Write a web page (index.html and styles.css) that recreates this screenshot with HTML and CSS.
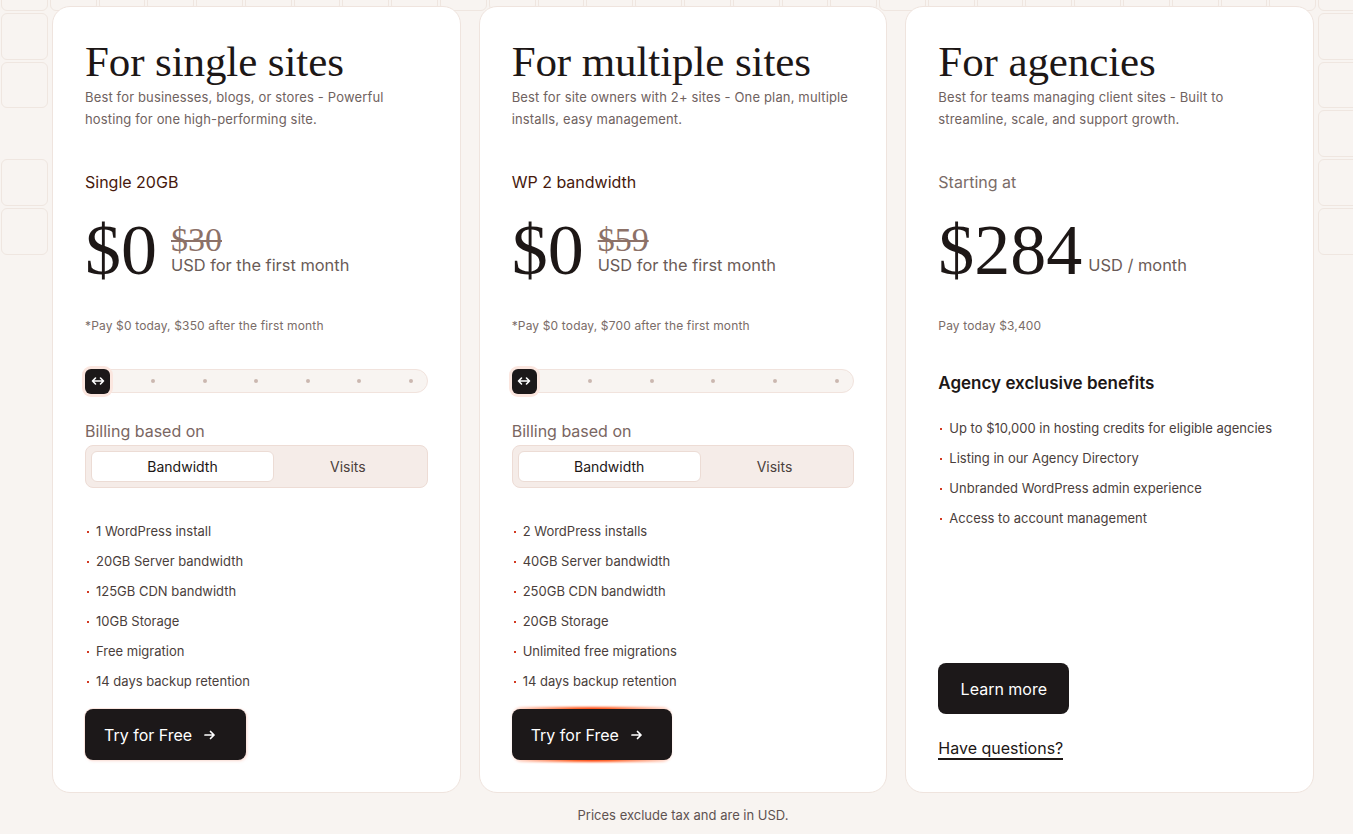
FILE: index.html
```html
<!DOCTYPE html>
<html lang="en">
<head>
<meta charset="utf-8">
<title>Pricing</title>
<link rel="stylesheet" href="styles.css">
</head>
<body>
<div class="bg-grid" aria-hidden="true">
  <i></i><i></i><i></i><i></i><i></i><i></i><i></i><i></i><i></i><i></i><i></i><i></i><i></i><i></i><i></i><i></i><i></i><i></i><i></i><i></i><i></i><i></i><i></i><i></i><i></i><i></i><i></i><i></i>
  <i class="l"></i><i class="r"></i>
  <i class="l"></i><i class="r"></i>
  <i class="l hide"></i><i class="r"></i>
  <i class="l"></i><i class="r"></i>
  <i class="l"></i><i class="r"></i>
</div>

<main class="page">
  <section class="cards">
    <article class="card">
      <h2 class="title">For single sites</h2>
      <p class="desc">Best for businesses, blogs, or stores - Powerful hosting for one high-performing site.</p>
      <div class="plan">Single 20GB</div>
      <div class="price-row">
        <div class="price">$0</div>
        <div class="price-side">
          <div class="old">$30</div>
          <div class="unit">USD for the first month</div>
        </div>
      </div>
      <p class="paynote">*Pay $0 today, $350 after the first month</p>
      <div class="slider">
        <span class="handle"><svg width="14" height="10" viewBox="0 0 14 10"><path d="M1.5 5h11M4.5 2 1.5 5l3 3M9.5 2l3 3-3 3" fill="none" stroke="#fff" stroke-width="1.6" stroke-linecap="round" stroke-linejoin="round"/></svg></span>
        <span class="dots dots-6"><i></i><i></i><i></i><i></i><i></i><i></i></span>
      </div>
      <div class="billing-label">Billing based on</div>
      <div class="toggle">
        <span class="opt active">Bandwidth</span>
        <span class="opt">Visits</span>
      </div>
      <ul class="features">
        <li>1 WordPress install</li>
        <li>20GB Server bandwidth</li>
        <li>125GB CDN bandwidth</li>
        <li>10GB Storage</li>
        <li>Free migration</li>
        <li>14 days backup retention</li>
      </ul>
      <a class="btn btn-soft">Try for Free <svg width="12" height="10" viewBox="0 0 12 10"><path d="M1 5h9M6.5 1.5 10 5l-3.5 3.5" fill="none" stroke="#fff" stroke-width="1.7" stroke-linecap="round" stroke-linejoin="round"/></svg></a>
    </article>

    <article class="card">
      <h2 class="title">For multiple sites</h2>
      <p class="desc">Best for site owners with 2+ sites - One plan, multiple installs, easy management.</p>
      <div class="plan">WP 2 bandwidth</div>
      <div class="price-row">
        <div class="price">$0</div>
        <div class="price-side">
          <div class="old">$59</div>
          <div class="unit">USD for the first month</div>
        </div>
      </div>
      <p class="paynote">*Pay $0 today, $700 after the first month</p>
      <div class="slider">
        <span class="handle"><svg width="14" height="10" viewBox="0 0 14 10"><path d="M1.5 5h11M4.5 2 1.5 5l3 3M9.5 2l3 3-3 3" fill="none" stroke="#fff" stroke-width="1.6" stroke-linecap="round" stroke-linejoin="round"/></svg></span>
        <span class="dots dots-5"><i></i><i></i><i></i><i></i><i></i></span>
      </div>
      <div class="billing-label">Billing based on</div>
      <div class="toggle">
        <span class="opt active">Bandwidth</span>
        <span class="opt">Visits</span>
      </div>
      <ul class="features">
        <li>2 WordPress installs</li>
        <li>40GB Server bandwidth</li>
        <li>250GB CDN bandwidth</li>
        <li>20GB Storage</li>
        <li>Unlimited free migrations</li>
        <li>14 days backup retention</li>
      </ul>
      <a class="btn btn-glow">Try for Free <svg width="12" height="10" viewBox="0 0 12 10"><path d="M1 5h9M6.5 1.5 10 5l-3.5 3.5" fill="none" stroke="#fff" stroke-width="1.7" stroke-linecap="round" stroke-linejoin="round"/></svg></a>
    </article>

    <article class="card">
      <h2 class="title">For agencies</h2>
      <p class="desc">Best for teams managing client sites - Built to streamline, scale, and support growth.</p>
      <div class="plan plan-muted">Starting at</div>
      <div class="price-row price-row-tight">
        <div class="price">$284</div>
        <div class="price-side">
          <div class="unit">USD / month</div>
        </div>
      </div>
      <p class="paynote">Pay today $3,400</p>
      <h3 class="benefits-title">Agency exclusive benefits</h3>
      <ul class="features features-agency">
        <li>Up to $10,000 in hosting credits for eligible agencies</li>
        <li>Listing in our Agency Directory</li>
        <li>Unbranded WordPress admin experience</li>
        <li>Access to account management</li>
      </ul>
      <div class="agency-actions">
        <a class="btn btn-center">Learn more</a>
        <a class="questions">Have questions?</a>
      </div>
    </article>
  </section>
  <p class="footnote">Prices exclude tax and are in USD.</p>
</main>
</body>
</html>
```

FILE: styles.css
```css
* { box-sizing: border-box; }

html, body {
  margin: 0;
  padding: 0;
}

body {
  width: 1353px;
  height: 834px;
  overflow: hidden;
  position: relative;
  background: #f8f4f1;
  font-family: Inter, "Noto Sans", "Liberation Sans", sans-serif;
  color: #1d1716;
}

/* decorative tile grid behind the cards */
.bg-grid {
  position: absolute;
  top: -37px;
  left: 0;
  width: 1366px;
  display: grid;
  grid-template-columns: repeat(28, 1fr);
  grid-auto-rows: 48.8px;
  z-index: 0;
}
.bg-grid i {
  display: block;
  margin: 1px;
  border: 1px solid #efe6e0;
  border-radius: 6px;
}
.bg-grid i.l { grid-column: 1; }
.bg-grid i.r { grid-column: 28; }
.bg-grid i.hide { border-color: transparent; }

.page {
  position: relative;
  z-index: 1;
  padding: 6px 0 0 52px;
}

.cards {
  width: 1262px;
  display: grid;
  grid-template-columns: repeat(3, 1fr);
  gap: 18px;
}

.card {
  position: relative;
  z-index: 0;
  height: 787px;
  background: #fff;
  border: 1px solid #efe4de;
  border-radius: 18px;
  padding: 32px;
  display: flex;
  flex-direction: column;
}

.title {
  margin: 0;
  font-family: "Liberation Serif", "Times New Roman", serif;
  font-weight: 400;
  font-size: 43px;
  line-height: 44px;
  padding-top: 1px;
  height: 44px;
  color: #1d1716;
  letter-spacing: -0.1px;
}

.desc {
  margin: 3px 0 0;
  font-size: 13px;
  line-height: 22px;
  letter-spacing: 0.15px;
  color: #6f6260;
}

.plan {
  margin-top: 40px;
  font-size: 16px;
  line-height: 24px;
  color: #47190d;
}
.plan-muted { color: #7a6c68; }

.price-row {
  margin-top: 20px;
  display: flex;
  align-items: flex-end;
  gap: 14px;
}
.price-row-tight { gap: 6px; }
.price {
  font-family: "Liberation Serif", "Times New Roman", serif;
  font-size: 72px;
  line-height: 72px;
  color: #1d1716;
}
.price-side {
  padding-bottom: 10px;
  display: flex;
  flex-direction: column;
}
.old {
  font-family: "Liberation Serif", "Times New Roman", serif;
  font-size: 34px;
  line-height: 28px;
  color: #8c7168;
  text-decoration: line-through;
  text-decoration-thickness: 1.5px;
}
.unit {
  font-size: 16.4px;
  line-height: 22px;
  color: #6a5b57;
}

.paynote {
  margin: 31px 0 0;
  font-size: 12px;
  line-height: 18px;
  letter-spacing: 0.15px;
  color: #7a6c68;
}

.slider {
  margin-top: 34px;
  height: 24px;
  border: 1px solid #f1e3dd;
  border-radius: 12px;
  background: #f8f4f1;
  display: flex;
  align-items: center;
}
.handle {
  width: 25px;
  height: 25px;
  margin-left: -1px;
  border-radius: 6px;
  background: #1c1819;
  box-shadow: 0 0 0 3px #fbe6df;
  display: flex;
  align-items: center;
  justify-content: center;
}
.dots {
  flex: 1;
  display: flex;
  justify-content: space-between;
  padding-right: 14px;
}
.dots-6 { padding-left: 41px; }
.dots-5 { padding-left: 51px; }
.dots i {
  width: 4px;
  height: 4px;
  border-radius: 50%;
  background: #cbb7b0;
}

.billing-label {
  margin-top: 26px;
  font-size: 16px;
  line-height: 24px;
  color: #7a6662;
}

.toggle {
  margin-top: 2px;
  height: 43px;
  padding: 5px;
  border: 1px solid #eddcd5;
  border-radius: 8px;
  background: #f5ece8;
  display: flex;
}
.opt {
  flex: 1;
  display: flex;
  align-items: center;
  justify-content: center;
  font-size: 14px;
  color: #4b3f3c;
}
.opt.active {
  flex: 0 0 183px;
  background: #fff;
  border: 1px solid #ecdcd5;
  border-radius: 6px;
  color: #1d1716;
}

.features {
  list-style: none;
  margin: 28px 0 0;
  padding: 0;
}
.features li {
  position: relative;
  padding-left: 11px;
  font-size: 13px;
  line-height: 30px;
  color: #4a3e3b;
}
.features li::before {
  content: "";
  position: absolute;
  left: 2px;
  top: 15px;
  width: 2px;
  height: 2px;
  background: #d33a22;
}
.features-agency { margin-top: 18px; }

.btn {
  margin-top: 13px;
  align-self: flex-start;
  height: 51px;
  padding: 0 19px;
  display: inline-flex;
  align-items: center;
  gap: 12px;
  border-radius: 8px;
  background: #1c1819;
  color: #fff;
  font-size: 16px;
  text-decoration: none;
  position: relative;
}
.btn-soft {
  width: 161px;
  box-shadow: 0 0 0 1px #fbe6e0, 1px 1px 3px rgba(240, 150, 130, 0.35);
}
.btn-glow {
  width: 160px;
}
.btn-glow::before {
  content: "";
  position: absolute;
  left: 0;
  right: 0;
  top: -2px;
  bottom: -2px;
  border-radius: 9px;
  background: linear-gradient(90deg, rgba(255, 205, 190, 0.5) 0%, #ff5a1e 40%, #ff4a12 50%, #ff5a1e 60%, rgba(255, 205, 190, 0.5) 100%);
  filter: blur(1.2px);
  z-index: -1;
}
.btn-center {
  width: 131px;
  margin-top: 0;
  justify-content: center;
  padding: 0;
}

.benefits-title {
  margin: 36px 0 0;
  font-size: 17px;
  line-height: 24px;
  font-weight: 600;
  color: #1d1716;
}

.agency-actions {
  margin-top: auto;
  display: flex;
  flex-direction: column;
  align-items: flex-start;
}
.questions {
  margin-top: 24px;
  font-size: 16px;
  line-height: 20px;
  color: #1d1716;
  border-bottom: 2px solid #1d1716;
  text-decoration: none;
}

.footnote {
  width: 1262px;
  margin: 12px 0 0;
  text-align: center;
  font-size: 13px;
  line-height: 20px;
  color: #5e5250;
}
```
